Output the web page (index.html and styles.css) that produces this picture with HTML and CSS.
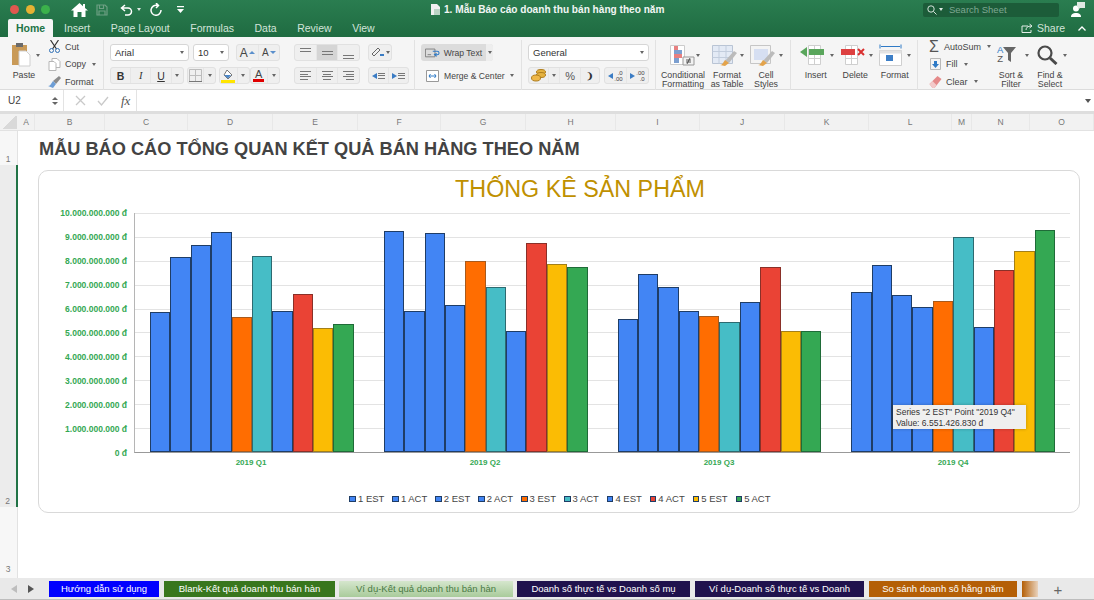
FILE: index.html
```html
<!DOCTYPE html>
<html lang="en">
<head>
  <meta charset="UTF-8">
  <title>1. Mẫu Báo cáo doanh thu bán hàng theo năm</title>
  <link rel="stylesheet" href="styles.css">
</head>
<body>
  <header class="titlebar">
    <div class="title-row">
      <div class="lights"><span class="light red"></span><span class="light yellow"></span><span class="light green"></span></div>
      <div class="quick">
        <svg class="q-home" width="17" height="14" viewBox="0 0 17 14"><path d="M8.5 0 0 7.5h2.5V14h4V9h4v5h4V7.5H17L14 5V1h-2v2.2z" fill="#fff"/></svg>
        <svg class="q-save" width="12" height="12" viewBox="0 0 12 12"><path d="M1 1h8l2 2v8H1zM3.5 1.500v3h4v-3M3 11V7h6v4" fill="none" stroke="#6d9f83" stroke-width="1.200"/></svg>
        <svg class="q-undo" width="13" height="12" viewBox="0 0 13 12"><path d="M5 1 1.500 4 5 7M2 4h6a3.500 3.500 0 0 1 0 7H5" fill="none" stroke="#fff" stroke-width="1.500"/></svg>
        <span class="tiny-arrow white q-arrow"></span>
        <svg class="q-redo" width="12" height="13" viewBox="0 0 12 13"><path d="M7.500 2.500A5 5 0 1 0 11 7M6 0l2.500 2.500L6 5" fill="none" stroke="#fff" stroke-width="1.500"/></svg>
        <svg class="q-more" width="7" height="7" viewBox="0 0 7 7"><path d="M0 0h7v1.200H0zM0 3h7L3.500 7z" fill="#fff"/></svg>
      </div>
      <div class="doc-title">
        <svg width="9" height="11" viewBox="0 0 9 11"><path d="M0 0h6l3 3v8H0z" fill="#f0f0f0"/><path d="M3 5h6v6H3z" fill="#b9d4c4"/></svg>
        1. Mẫu Báo cáo doanh thu bán hàng theo năm
      </div>
      <div class="search">
        <svg width="10" height="10" viewBox="0 0 10 10"><circle cx="4" cy="4" r="3.200" fill="none" stroke="#d5e4db" stroke-width="1"/><path d="m6.500 6.500 3 3" stroke="#d5e4db" stroke-width="1"/></svg>
        <span class="tiny-arrow white"></span>
        <span>Search Sheet</span>
      </div>
      <svg class="user" width="14" height="15" viewBox="0 0 14 15"><circle cx="5" cy="6.500" r="3" fill="#fff"/><path d="M0 15c0-3 2-4 5-4s5 1 5 4z" fill="#fff"/><path d="M6 0h8v6H9L7 8V5H6z" fill="#dfe9e3"/></svg>
    </div>
    <div class="tab-row">
      <nav class="ribbon-tabs">
        <a class="active">Home</a>
        <a>Insert</a>
        <a>Page Layout</a>
        <a>Formulas</a>
        <a>Data</a>
        <a>Review</a>
        <a>View</a>
      </nav>
      <div class="share">
        <svg width="12" height="10" viewBox="0 0 12 10"><path d="M7 3H1v6.500h9V7M5 7c0-2.500 2-4 5-4M8.500 1l2.500 2-2.500 2" fill="none" stroke="#e3eee8" stroke-width="1"/></svg>
        <span>Share</span>
        <svg class="chev" width="8" height="5" viewBox="0 0 8 5"><path d="m.5 4.500 3.500-3.500 3.500 3.500" fill="none" stroke="#fff" stroke-width="1.300"/></svg>
      </div>
    </div>
  </header>

  <section class="ribbon">
    <div class="r-group clip-group">
      <div class="big paste">
        <svg width="20" height="25" viewBox="0 0 20 25"><path d="M1 3h15v20H1z" fill="#c99a57"/><path d="M5 1h7v4H5z" fill="#6b6b6b"/><path d="M8 9h7l4 4v11H8z" fill="#fff" stroke="#cfcfcf"/></svg>
        <span class="tiny-arrow side"></span>
        <span class="big-label">Paste</span>
      </div>
      <div class="clip-list">
        <div class="clip-item">
          <svg width="12" height="13" viewBox="0 0 12 13"><path d="M2 0l6 9M10 0 4 9" stroke="#333" stroke-width="1.200"/><circle cx="3" cy="10.500" r="2" fill="none" stroke="#2f6fb5"/><circle cx="9" cy="10.500" r="2" fill="none" stroke="#2f6fb5"/></svg>
          <span>Cut</span>
        </div>
        <div class="clip-item">
          <svg width="12" height="13" viewBox="0 0 12 13"><path d="M3.500.5h5l3 3v6h-8z" fill="#fff" stroke="#b5b5b5"/><path d="M.5 3.500h5l2 2v7h-7z" fill="#fff" stroke="#b5b5b5"/></svg>
          <span>Copy</span><span class="tiny-arrow"></span>
        </div>
        <div class="clip-item">
          <svg width="13" height="12" viewBox="0 0 13 12"><path d="m5 5 6-5 2 2-5 6z" fill="#8a8a8a"/><path d="M5 5 8 8 5 12 0 10c2 0 3-2 5-5z" fill="#6d9ed6"/></svg>
          <span>Format</span>
        </div>
      </div>
    </div>

    <div class="r-group font-group">
      <div class="stack">
        <div class="row">
          <div class="combo font-name"><span>Arial</span><span class="tiny-arrow"></span></div>
          <div class="combo font-size"><span>10</span><span class="tiny-arrow"></span></div>
          <div class="seg grow-shrink">
            <div class="btn"><span class="glyph-a">A</span><i class="up"></i></div>
            <div class="btn"><span class="glyph-a small">A</span><i class="down"></i></div>
          </div>
        </div>
        <div class="row">
          <div class="seg style-btns">
            <div class="btn glyph bold">B</div>
            <div class="btn glyph italic">I</div>
            <div class="btn glyph under">U</div>
            <div class="btn arrow-btn"><span class="tiny-arrow"></span></div>
          </div>
          <div class="seg borders">
            <div class="btn"><svg width="13" height="13" viewBox="0 0 13 13"><path d="M.5.5h12v12H.5zM6.500.5v12M.5 6.500h12" fill="none" stroke="#bdbdbd"/><path d="M0 12.500h13" stroke="#777"/></svg></div>
            <div class="btn arrow-btn"><span class="tiny-arrow"></span></div>
          </div>
          <div class="seg fill-color">
            <div class="btn"><svg width="14" height="14" viewBox="0 0 14 14"><path d="m6 1 5 5-4 4-4-4z" fill="#fff" stroke="#777"/><path d="M3 6h7l-3 3.500z" fill="#4a86c8"/><path d="M0 11h14v3H0z" fill="#ffe500"/></svg></div>
            <div class="btn arrow-btn"><span class="tiny-arrow"></span></div>
          </div>
          <div class="seg text-color">
            <div class="btn"><span class="font-a">A</span></div>
            <div class="btn arrow-btn"><span class="tiny-arrow"></span></div>
          </div>
        </div>
      </div>

      <div class="stack align-stack">
        <div class="row">
          <div class="seg triple">
            <div class="btn"><span class="lines top"><i></i><i></i></span></div>
            <div class="btn pressed"><span class="lines mid"><i></i><i></i></span></div>
            <div class="btn"><span class="lines low"><i></i><i></i></span></div>
          </div>
          <div class="seg orient">
            <div class="btn"><svg width="14" height="13" viewBox="0 0 14 13"><path d="m1 8 6-6 2 2-6 6z" fill="none" stroke="#666"/><path d="M9 9h4" stroke="#3b7cc4" stroke-width="2"/></svg><span class="tiny-arrow"></span></div>
          </div>
        </div>
        <div class="row">
          <div class="seg triple">
            <div class="btn"><span class="lines left"><i></i><i></i><i></i><i></i></span></div>
            <div class="btn"><span class="lines center"><i></i><i></i><i></i><i></i></span></div>
            <div class="btn"><span class="lines right"><i></i><i></i><i></i><i></i></span></div>
          </div>
          <div class="seg indent">
            <div class="btn"><i class="blue-left"></i><span class="lines short"><i></i><i></i><i></i></span></div>
            <div class="btn"><i class="blue-right"></i><span class="lines short"><i></i><i></i><i></i></span></div>
          </div>
        </div>
      </div>
    </div>

    <div class="r-group wrap-group">
      <div class="wrap-btn">
        <svg width="17" height="11" viewBox="0 0 17 11"><path d="M.5 1.500h11v9H.5zM3 8h4" fill="none" stroke="#777"/><path d="M9 4h5c3 0 3 4 0 4h-2m1.500-1.500L11 8l2.500 2" fill="none" stroke="#2f7ac6" stroke-width="1.200"/></svg>
        <span>Wrap Text</span>
        <span class="wrap-arrow"><span class="tiny-arrow"></span></span>
      </div>
      <div class="merge-btn">
        <svg width="13" height="12" viewBox="0 0 13 12"><path d="M.5.5h12v11H.5z" fill="#fff" stroke="#999"/><path d="M3 6h7M4.500 4 3 6l1.500 2M8.500 4 10 6 8.500 8" fill="none" stroke="#2f7ac6"/></svg>
        <span>Merge &amp; Center</span>
        <span class="tiny-arrow"></span>
      </div>
    </div>

    <div class="r-group number-group">
      <div class="combo number-format"><span>General</span><span class="tiny-arrow"></span></div>
      <div class="row">
        <div class="seg currency">
          <div class="btn coins"><svg width="15" height="13" viewBox="0 0 15 13"><ellipse cx="10" cy="3" rx="4.500" ry="2.500" fill="#e5b23f" stroke="#b07e1e"/><ellipse cx="10" cy="6" rx="4.500" ry="2.500" fill="#e5b23f" stroke="#b07e1e"/><ellipse cx="5" cy="9" rx="4.500" ry="3" fill="#eeb748" stroke="#b07e1e"/></svg></div>
          <div class="btn arrow-btn"><span class="tiny-arrow"></span></div>
          <div class="btn pct">%</div>
          <div class="btn comma">❩</div>
        </div>
        <div class="seg decimals">
          <div class="btn dec"><i class="blue-left"></i><span>.0<br>.00</span></div>
          <div class="btn dec"><i class="blue-right low"></i><span>.00<br>.0</span></div>
        </div>
      </div>
    </div>

    <div class="r-group styles-group">
      <div class="big cond">
        <svg width="27" height="21" viewBox="0 0 27 21"><path d="M1.500.5h14v19h-14z" fill="#fff" stroke="#ccc"/><path d="M5 1h4v4H5zM5 9h8v4H5z" fill="#e78080"/><path d="M5 5h8v4H5zM5 13h5v5H5z" fill="#7c9fd0"/><path d="M14 12h11v8H14z" fill="#f2f2f2" stroke="#999"/><path d="M17 15h5M17 17h5M21 13l-3 6" stroke="#333" fill="none" stroke-width=".8"/></svg>
        <span class="tiny-arrow side"></span>
        <span class="big-label">Conditional<br>Formatting</span>
      </div>
      <div class="big table">
        <svg width="26" height="21" viewBox="0 0 26 21"><path d="M.5.5h20v18H.5z" fill="#e3eaf5" stroke="#b9c4d4"/><path d="M7 .5v18M14 .5v18M.5 6.500h20M.5 12.500h20" stroke="#c2cddd"/><path d="m13 16 9-10 3 2-8 10z" fill="#bbb"/><path d="m13 15 4 3-4 3-5-1c2 0 3-2 5-5z" fill="#e3a34b"/></svg>
        <span class="tiny-arrow side"></span>
        <span class="big-label">Format<br>as Table</span>
      </div>
      <div class="big cell">
        <svg width="26" height="21" viewBox="0 0 26 21"><path d="M.5.5h20v18H.5z" fill="#f4f4f4" stroke="#c6c6c6"/><path d="M4 4h14v11H4z" fill="#d6dff2"/><path d="m13 16 9-10 3 2-8 10z" fill="#bbb"/><path d="m13 15 4 3-4 3-5-1c2 0 3-2 5-5z" fill="#e3a34b"/></svg>
        <span class="tiny-arrow side"></span>
        <span class="big-label">Cell<br>Styles</span>
      </div>
    </div>

    <div class="r-group cells-group">
      <div class="big ins">
        <svg width="25" height="20" viewBox="0 0 25 20"><path d="M8.500.5h12v19h-12zM14.500.5v19M8.500 13.500h12" fill="#fff" stroke="#cfcfcf"/><path d="M9 4h15v6H9z" fill="#5aa65c"/><path d="M7 2v10L0 7z" fill="#5aa65c"/></svg>
        <span class="tiny-arrow side"></span>
        <span class="big-label">Insert</span>
      </div>
      <div class="big del">
        <svg width="25" height="20" viewBox="0 0 25 20"><path d="M4.500.5h12v19h-12zM10.500.5v19M4.500 13.500h12" fill="#fff" stroke="#cfcfcf"/><path d="M0 4h14v6H0z" fill="#dd4040"/><path d="m17 4 6 6m0-6-6 6" stroke="#d92f2f" stroke-width="2"/></svg>
        <span class="tiny-arrow side"></span>
        <span class="big-label">Delete</span>
      </div>
      <div class="big fmt">
        <svg width="23" height="22" viewBox="0 0 23 22"><path d="M1 .5v4M22 .5v4M2 2.500h19" stroke="#2f7ac6"/><path d="M.5 6.500h22v15H.5z" fill="#fff" stroke="#cfcfcf"/><path d="M.5 6.500h22v3H.5z" fill="#e3e3e3"/><path d="M7 11h7v6H7z" fill="#3d7fc7"/></svg>
        <span class="tiny-arrow side"></span>
        <span class="big-label">Format</span>
      </div>
    </div>

    <div class="r-group edit-group">
      <div class="clip-list edit-list">
        <div class="clip-item"><span class="sigma">Σ</span><span>AutoSum</span><span class="tiny-arrow"></span></div>
        <div class="clip-item">
          <svg width="11" height="12" viewBox="0 0 11 12"><path d="M.5.5h10v11H.5z" fill="#f4f4f4" stroke="#b9b9b9"/><path d="M4 3h3v3h2l-3.500 4L2 6h2z" fill="#2f7ac6"/></svg>
          <span>Fill</span><span class="tiny-arrow"></span>
        </div>
        <div class="clip-item">
          <svg width="12" height="12" viewBox="0 0 12 12"><path d="m0 8 8-8 4 3-7 9H3z" fill="#e58a8a"/><path d="m0 8 3-3 4 4-2 3H3z" fill="#f3c9c9"/></svg>
          <span>Clear</span><span class="tiny-arrow"></span>
        </div>
      </div>
      <div class="big sort">
        <div class="sort-icon">
          <span class="sort-az"><b>A</b><b class="z">Z</b></span>
          <svg width="13" height="15" viewBox="0 0 13 15"><path d="M0 0h13L8 6v9l-3-2V6z" fill="#666"/></svg>
        </div>
        <span class="tiny-arrow side"></span>
        <span class="big-label">Sort &amp;<br>Filter</span>
      </div>
      <div class="big find">
        <svg width="21" height="20" viewBox="0 0 21 20"><circle cx="8" cy="8" r="6.500" fill="none" stroke="#4a4a4a" stroke-width="2.200"/><path d="m13 13 6.500 6" stroke="#4a4a4a" stroke-width="3"/></svg>
        <span class="tiny-arrow side"></span>
        <span class="big-label">Find &amp;<br>Select</span>
      </div>
    </div>
  </section>

  <section class="formula-bar">
    <div class="name-box"><span>U2</span><span class="spin"><i class="up"></i><i class="down"></i></span></div>
    <div class="formula-btns">
      <svg width="11" height="11" viewBox="0 0 11 11"><path d="m1 1 9 9m0-9-9 9" stroke="#c9c9c9" stroke-width="1.300"/></svg>
      <svg width="12" height="10" viewBox="0 0 12 10"><path d="m1 5 3.500 4L11 1" fill="none" stroke="#c9c9c9" stroke-width="1.300"/></svg>
      <span class="fx">fx</span>
    </div>
    <div class="formula-input"><span class="tiny-arrow dark"></span></div>
  </section>

  <div class="col-head">
    <div class="corner"></div>
    <span>A</span><span>B</span><span>C</span><span>D</span><span>E</span><span>F</span><span>G</span><span>H</span>
    <span>I</span><span>J</span><span>K</span><span>L</span><span>M</span><span>N</span><span>O</span>
  </div>

  <main class="sheet">
    <div class="row-head">
      <div>1</div>
      <div class="selected">2</div>
      <div class="last">3</div>
    </div>
    <div class="cells">
      <h1 class="report-title">MẪU BÁO CÁO TỔNG QUAN KẾT QUẢ BÁN HÀNG THEO NĂM</h1>
      <div class="chart-card">
        <h2 class="chart-title">THỐNG KÊ SẢN PHẨM</h2>
        <div class="chart-body">
          <div class="y-axis">
            <span>10.000.000.000 đ</span>
            <span>9.000.000.000 đ</span>
            <span>8.000.000.000 đ</span>
            <span>7.000.000.000 đ</span>
            <span>6.000.000.000 đ</span>
            <span>5.000.000.000 đ</span>
            <span>4.000.000.000 đ</span>
            <span>3.000.000.000 đ</span>
            <span>2.000.000.000 đ</span>
            <span>1.000.000.000 đ</span>
            <span>0 đ</span>
          </div>
          <div class="plot">
            <div class="quarter">
              <div class="bar blue" style="height:58.5%"></div>
              <div class="bar blue" style="height:81.5%"></div>
              <div class="bar blue" style="height:86.7%"></div>
              <div class="bar blue" style="height:92%"></div>
              <div class="bar orange" style="height:56.7%"></div>
              <div class="bar teal" style="height:82%"></div>
              <div class="bar blue" style="height:59%"></div>
              <div class="bar red" style="height:66%"></div>
              <div class="bar yellow" style="height:52%"></div>
              <div class="bar green" style="height:53.7%"></div>
            </div>
            <div class="quarter">
              <div class="bar blue" style="height:92.5%"></div>
              <div class="bar blue" style="height:59%"></div>
              <div class="bar blue" style="height:91.5%"></div>
              <div class="bar blue" style="height:61.5%"></div>
              <div class="bar orange" style="height:80%"></div>
              <div class="bar teal" style="height:69%"></div>
              <div class="bar blue" style="height:50.5%"></div>
              <div class="bar red" style="height:87.5%"></div>
              <div class="bar yellow" style="height:78.7%"></div>
              <div class="bar green" style="height:77.5%"></div>
            </div>
            <div class="quarter">
              <div class="bar blue" style="height:55.5%"></div>
              <div class="bar blue" style="height:74.5%"></div>
              <div class="bar blue" style="height:69%"></div>
              <div class="bar blue" style="height:59%"></div>
              <div class="bar orange" style="height:57%"></div>
              <div class="bar teal" style="height:54.5%"></div>
              <div class="bar blue" style="height:62.7%"></div>
              <div class="bar red" style="height:77.5%"></div>
              <div class="bar yellow" style="height:50.5%"></div>
              <div class="bar green" style="height:50.5%"></div>
            </div>
            <div class="quarter">
              <div class="bar blue" style="height:67%"></div>
              <div class="bar blue" style="height:78.2%"></div>
              <div class="bar blue" style="height:65.5%"></div>
              <div class="bar blue" style="height:60.8%"></div>
              <div class="bar orange" style="height:63%"></div>
              <div class="bar teal" style="height:90%"></div>
              <div class="bar blue" style="height:52.5%"></div>
              <div class="bar red" style="height:76%"></div>
              <div class="bar yellow" style="height:84.3%"></div>
              <div class="bar green" style="height:92.7%"></div>
            </div>
            <div class="tooltip">Series "2 EST" Point "2019 Q4"<br>Value: 6.551.426.830 đ</div>
          </div>
        </div>
        <div class="x-axis">
          <span>2019 Q1</span><span>2019 Q2</span><span>2019 Q3</span><span>2019 Q4</span>
        </div>
        <div class="legend">
          <span class="key"><i class="blue"></i>1 EST</span>
          <span class="key"><i class="blue"></i>1 ACT</span>
          <span class="key"><i class="blue"></i>2 EST</span>
          <span class="key"><i class="blue"></i>2 ACT</span>
          <span class="key"><i class="orange"></i>3 EST</span>
          <span class="key"><i class="teal"></i>3 ACT</span>
          <span class="key"><i class="blue"></i>4 EST</span>
          <span class="key"><i class="red"></i>4 ACT</span>
          <span class="key"><i class="yellow"></i>5 EST</span>
          <span class="key"><i class="green"></i>5 ACT</span>
        </div>
      </div>
    </div>
  </main>

  <footer class="sheet-tabs">
    <div class="tab-nav"><i class="prev"></i><i class="next"></i></div>
    <a class="tab t-blue">Hướng dẫn sử dụng</a>
    <a class="tab t-green">Blank-Kết quả doanh thu bán hàn</a>
    <a class="tab t-active">Ví dụ-Kết quả doanh thu bán hàn</a>
    <a class="tab t-navy one">Doanh số thực tế vs Doanh số mụ</a>
    <a class="tab t-navy two">Ví dụ-Doanh số thực tế vs Doanh</a>
    <a class="tab t-orange">So sánh doanh số hằng năm</a>
    <a class="tab t-fade"></a>
    <span class="add-tab">+</span>
  </footer>
</body>
</html>
```

FILE: styles.css
```css
* {
  box-sizing: border-box;
}
html, body {
  margin: 0;
  padding: 0;
  height: 600px;
  overflow: hidden;
}
body {
  font-family: "Liberation Sans", Arial, sans-serif;
  background-color: #fff;
  color: #333;
  display: flex;
  flex-direction: column;
}

/* title bar */
.titlebar {
  height: 37px;
  background: linear-gradient(#2a7d50, #1f6b41);
  color: #fff;
  flex: none;
}
.title-row {
  height: 19px;
  display: flex;
  align-items: center;
  padding-left: 10px;
}
.lights {
  display: flex;
  gap: 6.500px;
  width: 61px;
}
.light {
  width: 9px;
  height: 9px;
  border-radius: 50%;
}
.light.red { background-color: #e0584f; }
.light.yellow { background-color: #e5b233; }
.light.green { background-color: #3bb14b; }
.quick {
  display: flex;
  align-items: center;
  width: 360px;
}
.q-save { margin-left: 8px; }
.q-undo { margin-left: 12px; }
.q-arrow { margin-left: 4px; }
.q-redo { margin-left: 9px; }
.q-more { margin-left: 15px; }
.doc-title {
  display: flex;
  align-items: center;
  gap: 4px;
  width: 492px;
  font-size: 10.100px;
  font-weight: bold;
  color: #f2f6f4;
}
.search {
  width: 136px;
  height: 14px;
  background-color: #1c5c39;
  border-radius: 2px;
  display: flex;
  align-items: center;
  gap: 2px;
  padding-left: 4px;
  font-size: 9.500px;
  color: #7fa892;
}
.search span:last-child { margin-left: 4px; }
.user { margin-left: 12px; }
.tab-row {
  height: 18px;
  display: flex;
  justify-content: space-between;
}
.ribbon-tabs {
  display: flex;
  padding-left: 8px;
  font-size: 10.500px;
  color: #d3e4da;
}
.ribbon-tabs a {
  margin-right: 20.500px;
  line-height: 18px;
  white-space: nowrap;
}
.ribbon-tabs a.active {
  background-color: #f5f5f5;
  color: #217346;
  font-weight: bold;
  width: 45px;
  text-align: center;
  margin-right: 11px;
  border-radius: 2px 2px 0 0;
}
.share {
  display: flex;
  align-items: center;
  gap: 4px;
  font-size: 10.500px;
  color: #d3e4da;
  padding-right: 8px;
}
.chev { margin-left: 9px; }

/* small shared bits */
.tiny-arrow {
  display: inline-block;
  width: 0;
  height: 0;
  border-left: 2px solid transparent;
  border-right: 2px solid transparent;
  border-top: 3px solid #666;
  flex: none;
}
.tiny-arrow.white { border-top-color: #dfe9e3; }
.tiny-arrow.dark { border-top-color: #555; border-left-width: 3px; border-right-width: 3px; border-top-width: 4px; }

/* ribbon */
.ribbon {
  height: 53px;
  background-color: #f5f5f5;
  display: flex;
  flex: none;
  border-bottom: 1px solid #dcdcdc;
  font-size: 9px;
  color: #444;
}
.r-group {
  height: 49.500px;
  margin-top: 3px;
  border-right: 1px solid #e2e2e2;
  flex: none;
}
.clip-group {
  width: 104px;
  display: flex;
}
.big {
  position: relative;
  display: flex;
  flex-direction: column;
  align-items: center;
  justify-content: flex-end;
  height: 49.500px;
  text-align: center;
}
.big svg, .sort-icon {
  position: absolute;
  top: 5px;
}
.big-label {
  font-size: 8.800px;
  line-height: 9.500px;
  height: 19px;
  display: flex;
  align-items: flex-start;
  white-space: nowrap;
}
.big .tiny-arrow.side {
  position: absolute;
  top: 14px;
}
.paste {
  width: 48px;
}
.paste svg { left: 11px; top: 2px; }
.paste .side { left: 36px; }
.clip-list {
  display: flex;
  flex-direction: column;
  gap: 4.500px;
}
.clip-item {
  display: flex;
  align-items: center;
  gap: 4px;
  height: 13px;
  white-space: nowrap;
}
.clip-item svg { width: 13px; flex: none; }
.clip-list .tiny-arrow { margin-left: 2px; }

.font-group {
  width: 311px;
  display: flex;
  padding: 4px 0 0 6px;
  gap: 14px;
}
.stack {
  display: flex;
  flex-direction: column;
  gap: 6px;
  width: 170px;
}
.align-stack { width: 116px; }
.row {
  display: flex;
  height: 17px;
}
.combo {
  height: 17px;
  background-color: #fff;
  border: 1px solid #d6d6d6;
  border-radius: 3px;
  display: flex;
  align-items: center;
  justify-content: space-between;
  padding: 0 4px;
  font-size: 9.500px;
  color: #333;
}
.font-name { width: 79px; margin-right: 4px; }
.font-size { width: 36px; margin-right: 7px; }
.seg {
  height: 17px;
  display: flex;
  background-color: #efefef;
  border: 1px solid #e1e1e1;
  border-radius: 3px;
}
.btn {
  flex: 1;
  display: flex;
  align-items: center;
  justify-content: center;
  gap: 1px;
  border-right: 1px solid #e6e6e6;
}
.btn:last-child { border-right: none; }
.btn.pressed { background-color: #d5d5d5; }
.arrow-btn { flex: none; width: 11px; }
.grow-shrink { width: 44px; }
.glyph-a { font-size: 12px; color: #444; }
.glyph-a.small { font-size: 10px; }
.btn .up, .spin .up {
  width: 0;
  height: 0;
  border-left: 3px solid transparent;
  border-right: 3px solid transparent;
  border-bottom: 3px solid #5a8fcc;
}
.btn .down, .spin .down {
  width: 0;
  height: 0;
  border-left: 3px solid transparent;
  border-right: 3px solid transparent;
  border-top: 3px solid #5a8fcc;
}
.style-btns { width: 75px; margin-right: 3px; }
.glyph { font-size: 10.500px; color: #333; }
.bold { font-weight: bold; }
.italic { font-style: italic; font-family: "Liberation Serif", serif; }
.under { text-decoration: underline; }
.borders { width: 30px; margin-right: 3px; }
.fill-color { width: 31px; margin-right: 0; }
.text-color { width: 31px; }
.font-a {
  font-size: 11px;
  line-height: 10px;
  color: #444;
  border-bottom: 3px solid #e00000;
  padding: 0 2px;
}
.triple { width: 66px; margin-right: 8px; }
.orient { width: 24px; }
.indent { width: 41px; }
.lines {
  display: flex;
  flex-direction: column;
  gap: 1.500px;
  width: 11px;
  height: 12px;
}
.lines i {
  display: block;
  height: 1px;
  background-color: #777;
}
.lines.top { justify-content: flex-start; padding-top: 1px; }
.lines.mid { justify-content: center; }
.lines.low { justify-content: flex-end; }
.lines.top, .lines.mid, .lines.low { gap: 2px; }
.lines.left i:nth-child(even) { width: 70%; }
.lines.center { align-items: center; }
.lines.center i { width: 100%; }
.lines.center i:nth-child(even) { width: 70%; }
.lines.right { align-items: flex-end; }
.lines.right i { width: 100%; }
.lines.right i:nth-child(even) { width: 70%; }
.lines.left, .lines.center, .lines.right { justify-content: center; }
.lines.short { width: 7px; justify-content: center; }
.blue-left, .blue-right {
  width: 0;
  height: 0;
  border-top: 3px solid transparent;
  border-bottom: 3px solid transparent;
}
.blue-left { border-right: 5px solid #3b7cc4; }
.blue-right { border-left: 5px solid #3b7cc4; }

.wrap-group {
  width: 107px;
  padding: 4px 0 0 6px;
  display: flex;
  flex-direction: column;
  gap: 6px;
  font-size: 8.600px;
}
.wrap-btn {
  width: 72px;
  height: 17px;
  background-color: #dcdcdc;
  border-radius: 3px;
  display: flex;
  align-items: center;
  gap: 4px;
  padding-left: 4px;
  color: #444;
  white-space: nowrap;
}
.wrap-arrow {
  background-color: #eee;
  height: 17px;
  width: 8px;
  margin-left: auto;
  display: flex;
  align-items: center;
  justify-content: center;
  border-radius: 0 3px 3px 0;
}
.merge-btn {
  height: 17px;
  display: flex;
  align-items: center;
  gap: 5px;
  padding-left: 5px;
  white-space: nowrap;
}
.number-group {
  width: 134px;
  padding: 4px 0 0 6px;
  display: flex;
  flex-direction: column;
  gap: 6px;
}
.number-format { width: 121px; }
.currency { width: 72px; margin-right: 4px; }
.coins { flex: 1.300; }
.pct { font-size: 11px; color: #555; flex: 1.400; }
.comma { font-size: 9px; font-weight: bold; color: #333; flex: 1.200; }
.decimals { width: 45px; }
.dec span {
  font-size: 6px;
  line-height: 6px;
  text-align: right;
}
.styles-group {
  width: 135px;
  display: flex;
  padding-left: 7px;
}
.cond { width: 40px; }
.cond svg { left: 6px; }
.cond .side { left: 33px; }
.table { width: 48px; }
.table svg { left: 9px; }
.table .side { left: 37px; }
.cell { width: 30px; }
.cell svg { left: -1px; }
.cell .side { left: 28px; }
.cells-group {
  width: 127px;
  display: flex;
  padding-left: 5px;
}
.big.ins, .big.del, .big.fmt { width: 39.500px; }
.ins svg { left: 4px; }
.ins .side { left: 34px; }
.del svg { left: 5px; }
.del .side { left: 33px; }
.fmt svg { left: 4px; top: 4px; }
.fmt .side { left: 32px; }
.edit-group {
  border-right: none;
  display: flex;
  flex: 1;
  padding-left: 11px;
}
.edit-list { width: 62px; }
.sigma {
  font-size: 16px;
  line-height: 13px;
  width: 13px;
  color: #555;
}
.sort { width: 40px; }
.sort-icon {
  left: 6px;
  display: flex;
  align-items: center;
  position: absolute;
}
.sort-icon svg { position: static; }
.sort-az {
  display: flex;
  flex-direction: column;
  font-size: 9.500px;
  line-height: 9px;
  font-weight: normal;
  color: #2f7ac6;
}
.sort-az b { font-weight: normal; }
.sort-az .z { color: #555; }
.sort .side { left: 34px; }
.find { width: 38px; }
.find svg { left: 6px; }
.find .side { left: 32px; }

/* formula bar */
.formula-bar {
  height: 24px;
  display: flex;
  flex: none;
  background-color: #fff;
  border-bottom: 3px solid #dedede;
  font-size: 10px;
}
.name-box {
  width: 64px;
  display: flex;
  align-items: center;
  justify-content: space-between;
  padding: 0 5px 0 8px;
  border-right: 1px solid #e3e3e3;
  color: #444;
}
.spin {
  display: flex;
  flex-direction: column;
  gap: 2px;
}
.spin .up { border-bottom-color: #666; }
.spin .down { border-top-color: #666; }
.formula-btns {
  width: 73px;
  display: flex;
  align-items: center;
  gap: 11px;
  padding-left: 11px;
  border-right: 1px solid #e3e3e3;
}
.fx {
  font-family: "Liberation Serif", serif;
  font-style: italic;
  font-size: 13px;
  color: #555;
  margin-left: 1px;
}
.formula-input {
  flex: 1;
  display: flex;
  align-items: center;
  justify-content: flex-end;
  padding-right: 3px;
}

/* column and row headers */
.col-head {
  height: 17px;
  flex: none;
  display: grid;
  grid-template-columns: 18px 17px 70px 83px 85px 85px 83px 85px 90px 84px 85px 84px 83px 20px 58px 64px;
  background-color: #f2f2f2;
  border-bottom: 1px solid #e2e2e2;
  font-size: 8.500px;
  color: #777;
}
.col-head span {
  text-align: center;
  line-height: 16px;
  border-right: 1px solid #e8e8e8;
}
.corner {
  background: linear-gradient(135deg, #f2f2f2 50%, #d9d9d9 50%);
  margin: 2px 1px 1px 2px;
}
.sheet {
  flex: 1;
  display: flex;
  min-height: 0;
}
.row-head {
  width: 18px;
  flex: none;
  display: grid;
  grid-template-rows: 34px 342px 71px;
  background-color: #f7f7f7;
  border-right: 1px solid #e2e2e2;
  font-size: 8.500px;
  color: #777;
}
.row-head div {
  display: flex;
  align-items: flex-end;
  justify-content: center;
  padding: 0 1px 1px 0;
}
.row-head .selected {
  background-color: #ececec;
  border-right: 2px solid #217346;
  margin-right: -1px;
}
.row-head .last { padding-bottom: 4px; }
.cells {
  flex: 1;
  padding-left: 20px;
}
.report-title {
  margin: 0;
  height: 34px;
  padding: 7px 0 0 1px;
  font-size: 18.200px;
  line-height: 22px;
  font-weight: bold;
  color: #434343;
  white-space: nowrap;
}

/* chart */
.chart-card {
  position: relative;
  width: 1042px;
  height: 343px;
  margin-top: 5px;
  border: 1px solid #d9d9d9;
  border-radius: 10px;
  background-color: #fff;
}
.chart-title {
  margin: 0;
  height: 42px;
  padding: 3px 0 0 42px;
  text-align: center;
  font-size: 23.300px;
  line-height: 30px;
  font-weight: normal;
  color: #bf9000;
}
.chart-body {
  display: flex;
  height: 240px;
}
.y-axis {
  width: 88px;
  height: 250px;
  margin-top: -5px;
  margin-right: 7px;
  display: flex;
  flex-direction: column;
  justify-content: space-between;
  align-items: flex-end;
  font-size: 8.500px;
  line-height: 10px;
  font-weight: bold;
  color: #34a853;
  white-space: nowrap;
}
.plot {
  position: relative;
  width: 936px;
  height: 240px;
  display: flex;
  border-left: 1px solid #b5b5b5;
  border-bottom: 1px solid #999;
  background-image: repeating-linear-gradient(to bottom, #e3e3e3 0, #e3e3e3 1px, transparent 1px, transparent 23.900px);
}
.quarter {
  flex: 1;
  display: flex;
  align-items: flex-end;
  padding: 0 15px;
}
.bar {
  flex: 1;
  border: 1px solid #1f3d66;
}
.blue { background-color: #4285f4; }
.orange { background-color: #ff6d01; border-color: #a85a1c; }
.teal { background-color: #46bdc6; border-color: #2d6a70; }
.red { background-color: #ea4335; border-color: #8a3028; }
.yellow { background-color: #fbbc04; border-color: #a37f18; }
.green { background-color: #34a853; border-color: #1f6b38; }
.tooltip {
  position: absolute;
  left: 758px;
  top: 192px;
  width: 133px;
  height: 24px;
  padding: 2px 3px;
  background-color: #efefef;
  box-shadow: 0 0 3px rgba(0, 0, 0, 0.25);
  font-size: 8.500px;
  line-height: 10.500px;
  color: #333;
  white-space: nowrap;
}
.x-axis {
  display: flex;
  margin: 5px 0 0 95px;
  width: 936px;
  font-size: 8px;
  line-height: 10px;
  font-weight: bold;
  color: #34a853;
}
.x-axis span {
  flex: 1;
  text-align: center;
}
.legend {
  display: flex;
  gap: 8px;
  justify-content: center;
  margin: 25px 0 0 2px;
  font-size: 9.500px;
  line-height: 12px;
  color: #444;
}
.key {
  display: flex;
  align-items: center;
  gap: 2px;
  white-space: nowrap;
}
.key i {
  width: 6.500px;
  height: 6.500px;
  border: 1px solid #1f3d66;
}

/* sheet tabs */
.sheet-tabs {
  height: 22px;
  flex: none;
  display: flex;
  align-items: center;
  background-color: #e9e9e9;
  border-bottom: 1px solid #bdbdbd;
  font-size: 9.500px;
  padding-top: 1px;
}
.tab-nav {
  width: 49px;
  display: flex;
  gap: 11px;
  padding-left: 11px;
}
.tab-nav i {
  width: 0;
  height: 0;
  border-top: 4px solid transparent;
  border-bottom: 4px solid transparent;
}
.tab-nav .prev { border-right: 6px solid #bdbdbd; }
.tab-nav .next { border-left: 6px solid #555; }
.tab {
  height: 16px;
  line-height: 16px;
  text-align: center;
  color: #fff;
  margin-right: 5px;
  white-space: nowrap;
}
.t-blue { width: 110px; background-color: #0000ff; }
.t-green { width: 171px; background-color: #38761d; margin-right: 4px; }
.t-active {
  width: 174px;
  background: linear-gradient(#d5e6cd, #a9cb9b);
  color: #4a7a45;
  margin-right: 4px;
}
.t-navy { background-color: #20124d; }
.t-navy.one { width: 173px; }
.t-navy.two { width: 169px; }
.t-orange { width: 148px; background-color: #b45f06; }
.t-fade {
  width: 16px;
  background: linear-gradient(to right, #b45f06, #e9d3bd);
  margin-right: 0;
}
.add-tab {
  margin-left: 13px;
  font-size: 15px;
  width: 14px;
  text-align: center;
  color: #666;
}
```
